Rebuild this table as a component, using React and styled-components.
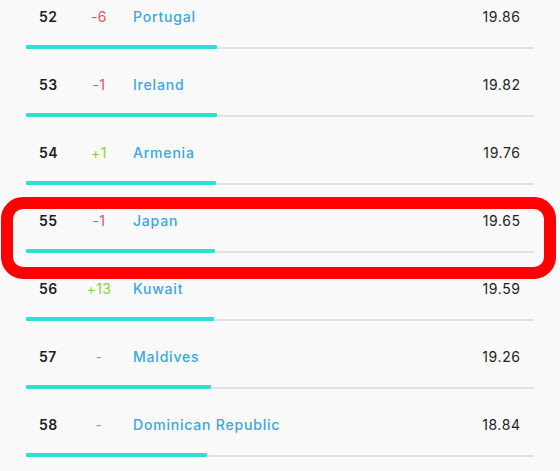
import React from "react";
import styled, { createGlobalStyle } from "styled-components";

const Global = createGlobalStyle`
  html, body { margin: 0; padding: 0; background: #fafafa; overflow: hidden; }
  body { font-family: Inter, "Noto Sans", sans-serif; -webkit-font-smoothing: antialiased; }
`;

const List = styled.div`
  width: 560px;
  padding-top: 6px;
  display: flex;
  flex-direction: column;
`;

const Row = styled.div`
  position: relative;
  display: flex;
  flex-direction: column;
  padding: 0 26px 25px 26px;
`;

const Line = styled.div`
  display: grid;
  grid-template-columns: 13px 31px 63px 1fr auto;
  align-items: center;
  height: 20px;
  font-size: 14px;
  padding-right: 14px;
`;

const Rank = styled.span`
  grid-column: 2;
  font-weight: 600;
  letter-spacing: 0.5px;
  color: #1d1d22;
`;

const Change = styled.span`
  grid-column: 3;
  text-align: center;
  padding-right: 5px;
  letter-spacing: 0.4px;
  color: ${(p) => (p.$dir === "up" ? "#86d142" : p.$dir === "down" ? "#f2505b" : "#9a9a9a")};
`;

const Country = styled.span`
  grid-column: 4;
  color: #3aa6e3;
  font-weight: 500;
  letter-spacing: 0.8px;
`;

const Score = styled.span`
  grid-column: 5;
  color: #222;
  letter-spacing: 0.6px;
  margin-right: -0.6px;
`;

const Bar = styled.div`
  margin-top: 18px;
  display: flex;
  align-items: flex-end;
  height: 5px;
`;

const Fill = styled.div`
  height: 4px;
  background: #2fe0d2;
  border-radius: 1px;
  flex: none;
`;

const Track = styled.div`
  flex: 1;
  height: 2px;
  background: #e1e1e3;
`;

const Highlight = styled.div`
  position: absolute;
  top: -13px;
  left: 1px;
  right: 4px;
  bottom: -1px;
  border: 12px solid #ff0000;
  border-radius: 22px;
  pointer-events: none;
`;

const rows = [
  { rank: 52, change: "-6", country: "Portugal", score: "19.86" },
  { rank: 53, change: "-1", country: "Ireland", score: "19.82" },
  { rank: 54, change: "+1", country: "Armenia", score: "19.76" },
  { rank: 55, change: "-1", country: "Japan", score: "19.65", hl: true },
  { rank: 56, change: "+13", country: "Kuwait", score: "19.59" },
  { rank: 57, change: "-", country: "Maldives", score: "19.26" },
  { rank: 58, change: "-", country: "Dominican Republic", score: "18.84" },
];

export default function App() {
  return (
    <>
      <Global />
      <List>
        {rows.map((r) => {
          const dir = r.change.startsWith("+") ? "up" : r.change.length > 1 ? "down" : "none";
          return (
            <Row key={r.rank}>
              <Line>
                <Rank>{r.rank}</Rank>
                <Change $dir={dir}>{r.change}</Change>
                <Country>{r.country}</Country>
                <Score>{r.score}</Score>
              </Line>
              <Bar>
                <Fill style={{ width: `${parseFloat(r.score) * 9.62}px` }} />
                <Track />
              </Bar>
              {r.hl && <Highlight />}
            </Row>
          );
        })}
      </List>
    </>
  );
}
